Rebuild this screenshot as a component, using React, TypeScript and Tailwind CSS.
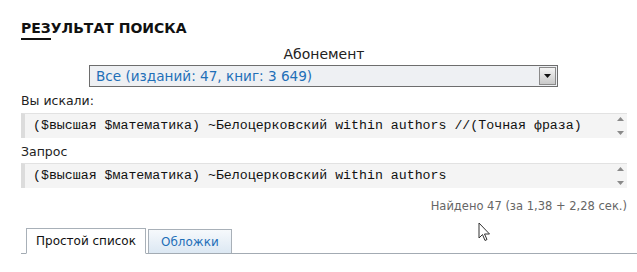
const queryFull = '($высшая $математика) ~Белоцерковский within authors //(Точная фраза)'
const queryShort = '($высшая $математика) ~Белоцерковский within authors'

function QueryBox({ text }: { text: string }) {
  return (
    <div className="flex h-[25px] items-stretch border-t border-l-4 border-[#e2e2e2] border-l-[#dcdcdc] bg-[#f4f4f4]">
      <div
        className="flex flex-1 items-center pl-[8px] text-[13.25px] text-[#111] whitespace-nowrap overflow-hidden"
        style={{ fontFamily: '"Liberation Mono", "Courier New", monospace' }}
      >
        {text}
      </div>
      <div className="flex w-[14px] flex-col items-center justify-between py-[3px]">
        <svg width="7" height="4" viewBox="0 0 7 4"><path d="M3.5 0L7 4H0z" fill="#8a8a8a" /></svg>
        <svg width="7" height="4" viewBox="0 0 7 4"><path d="M0 0h7L3.5 4z" fill="#8a8a8a" /></svg>
      </div>
    </div>
  )
}

export default function App() {
  return (
    <div
      className="relative h-[272px] w-[637px] overflow-hidden bg-white text-[#222]"
      style={{ fontFamily: '"DejaVu Sans", Verdana, sans-serif' }}
    >
      <div className="pl-[21px] pr-[10px] pt-[20px]">
        <h1 className="text-[14px] font-bold leading-[16px] text-[#111]">РЕЗУЛЬТАТ ПОИСКА</h1>
        <div className="mt-[2px] h-[2px] w-[30px] bg-[#111]" />

        <div className="mt-[6px] text-center text-[14px] leading-[17px] text-[#222]">Абонемент</div>
        <div className="ml-[68px] mt-[2px] flex h-[22px] w-[469px] items-center border border-[#6d6d6d] bg-[#eef0f3]">
          <span className="flex-1 pl-[6px] text-[13.6px] text-[#1f6fb8]">Все (изданий: 47, книг: 3 649)</span>
          <div className="mr-[1px] flex h-[18px] w-[17px] items-center justify-center border border-[#8a8a8a] bg-gradient-to-b from-[#f4f4f4] to-[#c9c9c9]">
            <svg width="7" height="4" viewBox="0 0 7 4"><path d="M0 0h7L3.5 4z" fill="#111" /></svg>
          </div>
        </div>

        <div className="mt-[6px] text-[12.5px] leading-[16px]">Вы искали:</div>
        <div className="mt-[4px]">
          <QueryBox text={queryFull} />
        </div>
        <div className="mt-[6px] text-[12.5px] leading-[16px]">Запрос</div>
        <div className="mt-[3px]">
          <QueryBox text={queryShort} />
        </div>

        <div className="mt-[11px] text-right text-[11.5px] leading-[15px] text-[#666]">Найдено 47 (за 1,38 + 2,28 сек.)</div>
      </div>

      <div className="ml-[21px] mt-[14px] flex items-end border-b border-[#a3abb3] pl-[5px]">
        <div className="mb-[-1px] flex h-[26px] items-center border border-b-white border-[#a8b0b8] bg-white px-[9px] text-[12px] text-[#111]">
          Простой список
        </div>
        <div className="ml-[2px] flex h-[24px] items-center border border-b-0 border-[#a8b0b8] bg-gradient-to-b from-[#f6f9fc] to-[#dce8f3] px-[12px] text-[12px] text-[#1f6fb8]">
          Обложки
        </div>
      </div>

      <svg className="absolute left-[478px] top-[222px]" width="13" height="20" viewBox="0 0 13 20">
        <path d="M1 1v15l3.5-3.5 2.5 6 2-1-2.5-5.5h5z" fill="#fff" stroke="#333" strokeWidth="1" strokeLinejoin="round" />
      </svg>
    </div>
  )
}
